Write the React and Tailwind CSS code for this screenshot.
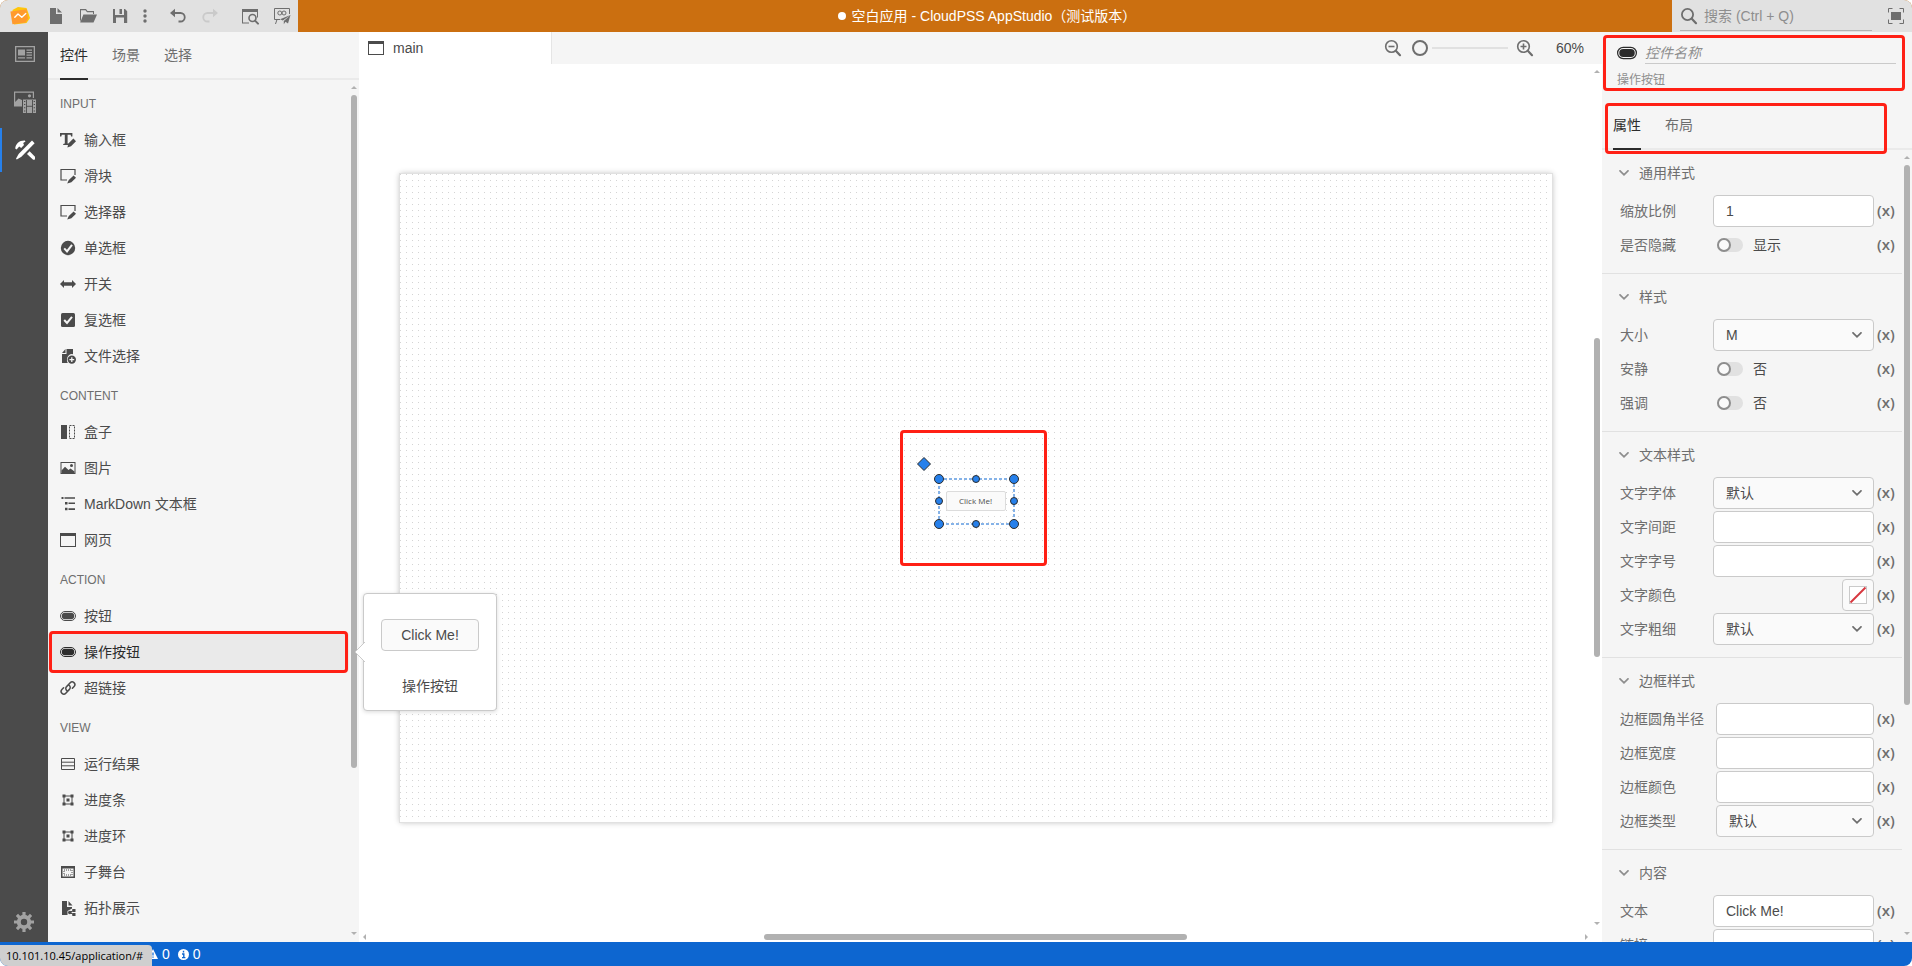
import React from "react";

const Svg = ({ size = "size-4", box = 16, children, className = "" }) => (
  <svg viewBox={`0 0 ${box} ${box}`} fill="currentColor" aria-hidden="true" className={`${size} shrink-0 ${className}`}>
    {children}
  </svg>
);

/* ---------- widget icons ---------- */
const IconTextEdit = () => (
  <Svg>
    <path d="M0 1h12.4v3.6h-1.3L10.600 2.800H7.600V11.400L9.200 12V13H3.200V12L4.800 11.400V2.800H1.800L1.300 4.600H0Z" />
    <path d="M13.400 6.600 16 9.200 11 14.200 7.400 15.600 8.400 11.600Z" />
  </Svg>
);
const IconSlate = () => (
  <Svg>
    <path d="M7 12H1V1.500H15V7" fill="none" stroke="currentColor" strokeWidth="1.200" />
    <path d="M13.600 7.400 16 9.800 11.400 14.200 7.200 15.600 8.800 12Z" />
  </Svg>
);
const IconRadio = () => (
  <Svg>
    <circle cx="8" cy="8" r="7.200" />
    <path d="M4.200 8.400 7 11.400 12 4.800" fill="none" stroke="#f5f5f5" strokeWidth="2" />
  </Svg>
);
const IconSwitch = () => (
  <Svg>
    <path d="M0 8 4 4v2.200h8V4l4 4-4 4V9.800H4V12Z" />
  </Svg>
);
const IconCheckbox = () => (
  <Svg>
    <rect x="1" y="1" width="14" height="14" rx="1.500" />
    <path d="M4.200 8 7 11 12 4.800" fill="none" stroke="#f5f5f5" strokeWidth="2" />
  </Svg>
);
const IconFileAdd = () => (
  <Svg>
    <path d="M2 6h4.500V1H13v5.200A5 5 0 0 0 7 11a5 5 0 0 0 .8 4H2Z" />
    <path d="M5.500 1v4H2Z" />
    <circle cx="11.800" cy="11.600" r="4.200" />
    <path d="M11.800 9.200v4.800M9.400 11.600h4.800" stroke="#f5f5f5" strokeWidth="1.300" />
  </Svg>
);
const IconBox = () => (
  <Svg>
    <rect x="1" y="1" width="6" height="14" />
    <rect x="9.500" y="1.500" width="5" height="13" fill="none" stroke="currentColor" strokeDasharray="2 1" />
  </Svg>
);
const IconImage = () => (
  <Svg>
    <rect x="1" y="2.500" width="14" height="11" fill="none" stroke="currentColor" />
    <path d="M1.500 10.500 5 6.800 8.500 10 10.500 8.500 14.500 11.500V13.500H1.500Z" />
    <circle cx="11.500" cy="5.500" r="1.500" />
  </Svg>
);
const IconOutline = () => (
  <Svg>
    <path d="M1.500 1h2v2h-2ZM4.500 1.200h10.500v1.600H4.500ZM5 6h2.500v2.500H5ZM8.500 6.500H15v1.600H8.500ZM5 11.800h2.500v2.500H5ZM8.500 12.300H15v1.600H8.500Z" />
  </Svg>
);
const IconWindow = ({ size }) => (
  <Svg size={size}>
    <path fillRule="evenodd" d="M0 1h16v14H0ZM1 4v10h14V4Z" />
  </Svg>
);
const IconButton = ({ size }) => (
  <Svg size={size}>
    <rect x="0.500" y="3.500" width="15" height="9" rx="4.500" fill="none" stroke="currentColor" strokeWidth="1" />
    <rect x="1.800" y="4.800" width="12.400" height="6.400" rx="3.200" />
  </Svg>
);
const IconLink = () => (
  <Svg>
    <g fill="none" stroke="currentColor" strokeWidth="1.500" strokeLinecap="round">
      <path d="M7.200 10.800A2.600 2.600 0 0 1 6.600 6.600L10.200 2.800a2.600 2.600 0 0 1 3.900 3.600L12.400 8.300" />
      <path d="M8.800 5.200a2.600 2.600 0 0 1 .6 4.200L5.800 13.200a2.600 2.600 0 0 1-3.900-3.600L3.600 7.700" />
    </g>
  </Svg>
);
const IconRows = () => (
  <Svg>
    <path d="M1.500 2.500h13v11h-13ZM1.500 6.200h13M1.500 9.800h13" fill="none" stroke="currentColor" />
  </Svg>
);
const IconFrame = () => (
  <Svg>
    <path d="M4 4h8v8H4Z" fill="none" stroke="currentColor" />
    <path d="M2.500 2.500h3v3h-3ZM10.500 2.500h3v3h-3ZM2.500 10.500h3v3h-3ZM10.500 10.500h3v3h-3ZM6.500 6.500h3v3h-3Z" />
  </Svg>
);
const IconStage = () => (
  <Svg>
    <path fillRule="evenodd" d="M1 2h14v12H1ZM2.500 4.500v8h11v-8Z" />
    <rect x="4" y="6" width="8" height="5" fill="none" stroke="currentColor" strokeDasharray="1 1" />
  </Svg>
);
const IconTopology = () => (
  <Svg>
    <path d="M2 1h5v6h5v1.500L7.500 11v4H2Z" />
    <path d="M8.500 1 12.500 5.500H8.500Z" />
    <path d="M13.500 10.500 9.500 12.500 13.500 14.500" fill="none" stroke="currentColor" />
    <circle cx="9.800" cy="12.500" r="1.800" />
    <path d="M12.300 9h3.200v3h-3.200ZM12.300 13h3.200v3h-3.200Z" />
  </Svg>
);

/* ---------- toolbar icons ---------- */
const IconLogo = () => (
  <Svg size="size-5" box={20}>
    <path d="M2.500 4 8 .9 16.500 2 18 6 20 12l-3.500 5L4 18.500Z" fill="#ffc60a" />
    <path d="M.4 5.600 16.600 3.200 18 12.600 15.600 16.600 2.400 18.200Z" fill="#ff9a2e" />
    <path d="M4.800 11.200 8 8l3.800 3.200 4-3.600" fill="none" stroke="#fff" strokeWidth="1.400" strokeLinecap="round" strokeLinejoin="round" />
  </Svg>
);
const IconFile = () => (
  <Svg size="size-[18px]" box={18}>
    <path d="M3 1h6v6h6v10H3ZM10.500 1 15 5.500H10.500Z" />
  </Svg>
);
const IconOpen = () => (
  <Svg size="size-[18px]" box={18}>
    <path d="M1 2h6l1.500 2H15v3h-1V5.200H8L6.500 3.200H2V12.500L1 15Z" />
    <path d="M4.400 7.500H18L14.500 15.500H1.200Z" />
  </Svg>
);
const IconSave = () => (
  <Svg size="size-[18px]" box={18}>
    <path fillRule="evenodd" d="M2 2h2v6h9V2h1l2.200 2.200V16H2ZM5 10.500V16h8v-5.500Z" />
    <path d="M8.500 2h2.500v5H8.500Z" />
  </Svg>
);
const IconMore = () => (
  <Svg size="size-4">
    <circle cx="8" cy="3" r="1.700" />
    <circle cx="8" cy="8" r="1.700" />
    <circle cx="8" cy="13" r="1.700" />
  </Svg>
);
const IconUndo = ({ flip = "" }) => (
  <Svg size="size-[18px]" box={18} className={flip}>
    <path d="M1 6 6 1.800v8.400Z" />
    <path d="M4 6h7.500a4 4 0 0 1 0 8.500H9.500" fill="none" stroke="currentColor" strokeWidth="1.800" />
  </Svg>
);
const IconPreview = () => (
  <Svg size="size-[18px]" box={18}>
    <path d="M1 2h16v8.500h-1V5H2v10.500h6v1H1Z" />
    <circle cx="11.500" cy="11" r="3.500" fill="none" stroke="currentColor" strokeWidth="1.600" />
    <path d="m14 13.600 3 3" stroke="currentColor" strokeWidth="2" strokeLinecap="round" />
  </Svg>
);
const IconPublish = () => (
  <Svg size="size-[18px]" box={18}>
    <path d="M7 12.500H1.500v-11h15V7" fill="none" stroke="currentColor" />
    <circle cx="6.800" cy="6" r="2" fill="none" stroke="currentColor" />
    <circle cx="11" cy="6" r="2" fill="none" stroke="currentColor" />
    <path d="M17.500 8 7 12.200l2.800 1.200ZM17.500 8l-6.700 6v3.200l1.700-2.400 2.500 1.600Z" />
    <path d="M4 12.500 2.500 17" stroke="currentColor" />
  </Svg>
);
const IconSearch = () => (
  <Svg size="size-[18px]" box={18}>
    <circle cx="7.500" cy="7.500" r="5.600" fill="none" stroke="currentColor" strokeWidth="1.800" />
    <path d="m11.800 11.800 4.200 4.400" stroke="currentColor" strokeWidth="2.200" strokeLinecap="round" />
  </Svg>
);
const IconZoom = ({ plus }) => (
  <Svg size="size-[18px]" box={18}>
    <circle cx="7.500" cy="7.500" r="5.800" fill="none" stroke="currentColor" strokeWidth="1.600" />
    <path d="m11.800 11.800 4.200 4.400" stroke="currentColor" strokeWidth="2.200" strokeLinecap="round" />
    <path d={plus ? "M4.500 7.500h6M7.500 4.500v6" : "M4.500 7.500h6"} stroke="currentColor" strokeWidth="1.600" />
  </Svg>
);
const IconFullscreen = () => (
  <Svg size="size-[18px]" box={18}>
    <path d="M1.500 5.500v-4h4M12.500 1.500h4v4M16.500 12.500v4h-4M5.500 16.500h-4v-4" fill="none" stroke="currentColor" />
    <rect x="4" y="5" width="10" height="8" />
  </Svg>
);

/* ---------- side rail icons ---------- */
const IconNews = () => (
  <Svg size="size-5" box={20}>
    <path fillRule="evenodd" d="M0 2h20v16H0ZM1.300 3.300v13.400h17.400V3.300Z" />
    <path d="M3 5.500h7v6H3ZM11.500 5.500H17v1.200h-5.500ZM11.500 8H17v1.200h-5.500ZM11.500 10.500H17v1.200h-5.500ZM3 13.300h7v1.200H3ZM11.500 13.300H17v1.200h-5.500Z" />
  </Svg>
);
const IconMedia = () => (
  <Svg size="size-[22px]" box={22}>
    <path d="M0 .5h20V7h-1.200V1.700H1.200V11L4.500 7.500 8 9V15.500H0Z" />
    <circle cx="15.500" cy="4.800" r="1.600" />
    <path d="M9 8.500h13V22H9Z" />
    <path d="M12.500 9v13M18.500 9v13M12.500 15.300h6" stroke="#4b4b4b" strokeWidth=".9" fill="none" />
    <path d="M10 10.500h1.300M10 13.500h1.300M10 16.800h1.300M10 20h1.300M19.700 10.500H21M19.700 13.500H21M19.700 16.800H21M19.700 20H21" stroke="#4b4b4b" strokeWidth="1.100" />
  </Svg>
);
const IconTools = () => (
  <Svg size="size-5" box={20}>
    <path d="M17 .6 19.600 3.200 6.400 16.800 1.800 19.600 1 18.800 3.600 14Z" />
    <path d="M.2 8.500C.8 3.600 4 .3 9.800.4L10.500 1.600 8.200 3 9 5 6.200 8 4.200 6.600 1.600 9.600Z" />
    <path d="M14.600 11.200 20 16.800a1.500 1.500 0 0 1-2.400 2.400L12 14Z" />
  </Svg>
);
const IconGear = () => (
  <Svg size="size-5" box={20}>
    <circle cx="10" cy="10" r="5.200" fill="none" stroke="currentColor" strokeWidth="4" />
    <g stroke="currentColor" strokeWidth="3.200">
      <path d="M10 0v4M10 16v4M0 10h4M16 10h4M2.930 2.930 5.800 5.800M14.200 14.200l2.870 2.870M2.930 17.070 5.800 14.200M14.200 5.800l2.870-2.870" />
    </g>
  </Svg>
);

const Chevron = ({ className = "" }) => (
  <svg viewBox="0 0 10 6" aria-hidden="true" className={`h-1.5 w-2.5 shrink-0 ${className}`}>
    <path d="M1 .8 5 4.800 9 .8" fill="none" stroke="currentColor" strokeWidth="1.700" strokeLinecap="round" />
  </svg>
);

/* ---------- scroll bars ---------- */
const VScroll = ({ thumb }) => (
  <div className="flex w-2.5 shrink-0 flex-col items-center gap-1.5 pt-1.5 pb-[7px] text-[#b1b1b1]">
    <svg viewBox="0 0 6 3" className="h-[3px] w-1.5 shrink-0" fill="currentColor"><path d="M0 3 3 0 6 3Z" /></svg>
    <div className="flex min-h-0 w-1.5 flex-1 flex-col">{thumb}</div>
    <svg viewBox="0 0 6 3" className="h-[3px] w-1.5 shrink-0" fill="currentColor"><path d="M0 0H6L3 3Z" /></svg>
  </div>
);
const HScroll = () => (
  <div className="mr-2.5 flex h-2.5 shrink-0 items-center gap-1.5 px-1 text-[#b1b1b1]">
    <svg viewBox="0 0 3 6" className="h-1.5 w-[3px] shrink-0" fill="currentColor"><path d="M3 0V6L0 3Z" /></svg>
    <div className="flex h-1.5 flex-1 justify-center">
      <div className="w-[35%] rounded-full bg-[#b1b1b1]" />
    </div>
    <svg viewBox="0 0 3 6" className="h-1.5 w-[3px] shrink-0" fill="currentColor"><path d="M0 0V6L3 3Z" /></svg>
  </div>
);

const Mark = ({ className }) => (
  <div className={`pointer-events-none absolute rounded-[4px] border-3 border-[#ff2015] ${className}`} />
);

/* ---------- header ---------- */
const tool = "flex h-8 w-8 items-center justify-center";
const Header = () => (
  <header className="flex h-8 shrink-0 bg-[#cb6f10]">
    <div className="flex bg-[#e1e1e1] pl-1 text-[#6e6e6e]">
      <button aria-label="CloudPSS" className={`${tool} mr-1`}><IconLogo /></button>
      <button aria-label="新建" className={tool}><IconFile /></button>
      <button aria-label="打开" className={tool}><IconOpen /></button>
      <button aria-label="保存" className={tool}><IconSave /></button>
      <button aria-label="更多" className="mr-2 flex w-[18px] items-center justify-center"><IconMore /></button>
      <button aria-label="撤销" className={tool}><IconUndo /></button>
      <button aria-label="重做" disabled className={`${tool} mr-2 text-[#cacaca]`}><IconUndo flip="-scale-x-100" /></button>
      <button aria-label="预览" className={tool}><IconPreview /></button>
      <button aria-label="发布" className={tool}><IconPublish /></button>
    </div>
    <h1 className="flex flex-1 items-center justify-center gap-1.5 pl-1 text-sm text-white">
      <span className="size-2 rounded-full bg-white" />
      空白应用 - CloudPSS AppStudio（测试版本）
    </h1>
    <div className="flex w-60 items-center bg-[#e1e1e1] pr-[7px] pl-2 text-[#6e6e6e]">
      <label className="flex h-[29px] flex-1 items-center gap-1.5 border-b border-[#b3b3b3]">
        <IconSearch />
        <input type="search" aria-label="搜索" placeholder="搜索 (Ctrl + Q)" className="w-40 bg-transparent text-sm outline-none placeholder:text-[#8e8e8e]" />
      </label>
      <button aria-label="全屏" className="ml-[15px]"><IconFullscreen /></button>
    </div>
  </header>
);

/* ---------- side rail ---------- */
const rail = "flex h-11 w-full items-center justify-center pl-0.5";
const Rail = () => (
  <nav className="flex w-12 shrink-0 flex-col gap-1 bg-[#4b4b4b] text-[#a2a2a2]">
    <button aria-label="页面" className={rail}><IconNews /></button>
    <button aria-label="资源" className={rail}><IconMedia /></button>
    <button aria-label="控件" className="flex h-11 w-full items-center justify-center border-l-2 border-[#2680eb] text-white"><IconTools /></button>
    <button aria-label="设置" className="mt-auto mb-2.5 flex w-full justify-center"><IconGear /></button>
  </nav>
);

/* ---------- widget panel ---------- */
const groups = [
  ["INPUT", [[IconTextEdit, "输入框"], [IconSlate, "滑块"], [IconSlate, "选择器"], [IconRadio, "单选框"], [IconSwitch, "开关"], [IconCheckbox, "复选框"], [IconFileAdd, "文件选择"]]],
  ["CONTENT", [[IconBox, "盒子"], [IconImage, "图片"], [IconOutline, "MarkDown 文本框"], [IconWindow, "网页"]]],
  ["ACTION", [[IconButton, "按钮"], [IconButton, "操作按钮"], [IconLink, "超链接"]]],
  ["VIEW", [[IconRows, "运行结果"], [IconFrame, "进度条"], [IconFrame, "进度环"], [IconStage, "子舞台"], [IconTopology, "拓扑展示"]]],
];

const tabOn = "h-full border-b-2 border-[#2c2c2c] text-[#2c2c2c]";
const tabOff = "h-full border-b-2 border-transparent text-[#6e6e6e]";

const WidgetPanel = () => (
  <aside className="flex w-[311px] shrink-0 flex-col bg-[#f5f5f5]">
    <div className="flex h-12 shrink-0 gap-6 px-3 text-sm shadow-[inset_0_-2px_#eaeaea]">
      <button className={tabOn}>控件</button>
      <button className={tabOff}>场景</button>
      <button className={tabOff}>选择</button>
    </div>
    <div className="flex min-h-0 flex-1">
      <div className="flex-1 overflow-hidden pt-0.5">
        {groups.map(([title, items]) => (
          <section key={title}>
            <h2 className="flex h-10 items-center px-3 pt-1 text-xs text-[#6e6e6e]">{title}</h2>
            <ul>
              {items.map(([Icon, name]) => {
                const active = name === "操作按钮";
                return (
                  <li key={name} className="relative">
                    <button className={`flex h-9 w-full items-center gap-2 px-3 text-sm ${active ? "bg-[#eaeaea] text-[#2c2c2c]" : "text-[#4b4b4b]"}`}>
                      <Icon />
                      {name}
                    </button>
                    {active && <Mark className="-inset-y-[3px] right-px left-px" />}
                  </li>
                );
              })}
            </ul>
          </section>
        ))}
      </div>
      <VScroll thumb={<div className="h-[81%] rounded-full bg-[#b1b1b1]" />} />
    </div>
  </aside>
);

const Preview = () => (
  <div className="absolute top-[561px] left-[363px] flex w-[134px] flex-col items-center rounded border border-[#cacaca] bg-white pt-[25px] pb-[14px] text-sm text-[#4b4b4b] shadow-[0_1px_4px_rgba(0,0,0,0.15)]">
    <svg viewBox="0 0 11 20" className="absolute top-12 -left-2.5 h-5 w-[11px]">
      <path d="M11 0 1 10 11 20" fill="#fff" stroke="#cacaca" />
    </svg>
    <button className="h-8 w-[98px] rounded border border-[#cacaca] bg-[#fafafa]">Click Me!</button>
    <span className="mt-[25px] leading-5">操作按钮</span>
  </div>
);

/* ---------- canvas ---------- */
const corners = [[20, 20], [95, 20], [20, 65], [95, 65]];
const mids = [[57, 20], [57, 65], [20, 42], [95, 42]];

const Canvas = () => (
  <main className="flex min-w-0 flex-1 flex-col bg-white">
    <div className="flex h-8 shrink-0 justify-between bg-[#f5f5f5] text-sm text-[#4b4b4b]">
      <button className="flex w-[193px] items-center gap-[9px] border-r border-[#e5e5e5] bg-white px-[9px]">
        <IconWindow />
        main
      </button>
      <div className="flex items-center pr-[18px] text-[#6e6e6e]">
        <button aria-label="缩小" className="mr-2.5"><IconZoom /></button>
        <input
          type="range"
          aria-label="缩放"
          defaultValue="0"
          className="mr-2 w-24 appearance-none bg-transparent [&::-webkit-slider-runnable-track]:h-0.5 [&::-webkit-slider-runnable-track]:bg-[linear-gradient(to_right,transparent_20px,#e1e1e1_20px)] [&::-webkit-slider-thumb]:-mt-[7px] [&::-webkit-slider-thumb]:size-4 [&::-webkit-slider-thumb]:appearance-none [&::-webkit-slider-thumb]:rounded-full [&::-webkit-slider-thumb]:border-2 [&::-webkit-slider-thumb]:border-[#6e6e6e] [&::-webkit-slider-thumb]:bg-[#f5f5f5]"
        />
        <button aria-label="放大" className="mr-[22px]"><IconZoom plus /></button>
        <span className="text-[#4b4b4b]">60%</span>
      </div>
    </div>
    <div className="flex min-h-0 flex-1">
      <div className="flex flex-1 items-center justify-center overflow-hidden">
        <div className="relative h-[648px] w-[1152px] shrink-0 bg-white bg-[radial-gradient(circle_at_0_0,#d4d4d4_1px,transparent_1px)] bg-size-[6px_6px] shadow-[0_0_0_1px_#e1e1e1,0_0_6px_rgba(0,0,0,0.3)]">
          <button className="absolute top-[317px] left-[546px] h-5 w-[60px] rounded-[2px] border border-[#dcdcdc] bg-[#fafafa] font-['Open_Sans',sans-serif] text-[8px] leading-none text-[#4b4b4b]">
            Click Me!
          </button>
          <svg viewBox="0 0 115 85" className="absolute top-[285px] left-[519px] h-[85px] w-[115px] overflow-visible">
            <rect x="20" y="20" width="75" height="45" fill="none" stroke="#0d66d0" strokeDasharray="3 2" />
            <path d="M5-1.500 11.500 5 5 11.500-1.500 5Z" fill="#2680eb" stroke="#2c2c2c" />
            {corners.map(([x, y]) => <circle key={`${x}-${y}`} cx={x} cy={y} r="4.500" fill="#2680eb" stroke="#2c2c2c" />)}
            {mids.map(([x, y]) => <circle key={`${x}-${y}`} cx={x} cy={y} r="3.500" fill="#2680eb" stroke="#2c2c2c" />)}
          </svg>
          <Mark className="top-64 left-[500px] h-[136px] w-[147px]" />
        </div>
      </div>
      <VScroll
        thumb={
          <>
            <div className="h-[31%]" />
            <div className="h-[38%] rounded-full bg-[#b1b1b1]" />
          </>
        }
      />
    </div>
    <HScroll />
  </main>
);

/* ---------- property panel ---------- */
const fieldBox = "h-8 w-full rounded border border-[#cacaca] px-3 text-sm text-[#4b4b4b] outline-none";

const Field = ({ id, kind, value }) => {
  if (kind === "text") return <input id={id} defaultValue={value} className={`${fieldBox} bg-white`} />;
  if (kind === "select")
    return (
      <div className="relative">
        <select id={id} className={`${fieldBox} block appearance-none bg-[#fafafa]`}>
          <option>{value}</option>
        </select>
        <Chevron className="pointer-events-none absolute top-[13px] right-3 text-[#6e6e6e]" />
      </div>
    );
  if (kind === "switch")
    return (
      <div className="flex items-center gap-2.5 pl-1 text-[#4b4b4b]">
        <input
          id={id}
          type="checkbox"
          className="h-3.5 w-[26px] appearance-none rounded-full bg-[#e1e1e1] before:block before:size-3.5 before:rounded-full before:border-2 before:border-[#8e8e8e] before:bg-[#fafafa] before:content-['']"
        />
        {value}
      </div>
    );
  return (
    <div className="flex justify-end">
      <button id={id} aria-label="选择颜色" className="flex size-8 items-center justify-center rounded border border-[#cacaca] bg-[#fafafa]">
        <svg viewBox="0 0 18 18" className="size-[18px]">
          <rect x=".5" y=".5" width="17" height="17" fill="#fff" stroke="#cacaca" />
          <path d="M1.500 16.500 16.500 1.500" stroke="#d7373f" strokeWidth="2" />
        </svg>
      </button>
    </div>
  );
};

const sections = [
  ["通用样式", [["缩放比例", "text", "1"], ["是否隐藏", "switch", "显示"]]],
  ["样式", [["大小", "select", "M"], ["安静", "switch", "否"], ["强调", "switch", "否"]]],
  ["文本样式", [["文字字体", "select", "默认"], ["文字间距", "text", ""], ["文字字号", "text", ""], ["文字颜色", "color", ""], ["文字粗细", "select", "默认"]]],
  ["边框样式", [["边框圆角半径", "text", ""], ["边框宽度", "text", ""], ["边框颜色", "text", ""], ["边框类型", "select", "默认"]]],
  ["内容", [["文本", "text", "Click Me!"], ["链接", "text", ""]]],
];

const PropertyPanel = () => (
  <aside className="flex w-[310px] shrink-0 flex-col bg-[#f5f5f5]">
    <div className="relative shrink-0 pt-2.5 pr-4 pb-[13px] pl-[15px]">
      <div className="flex items-center gap-2 text-[#2c2c2c]">
        <IconButton size="size-5" />
        <input aria-label="控件名称" placeholder="控件名称" className="h-[22px] min-w-0 flex-1 border-b border-[#cacaca] bg-transparent text-sm italic outline-none placeholder:text-[#8e8e8e]" />
      </div>
      <p className="mt-2 text-xs leading-4 text-[#8e8e8e]">操作按钮</p>
      <Mark className="top-[3px] right-[7px] left-px h-14" />
    </div>
    <div className="relative flex h-[49px] shrink-0 gap-6 px-[11px] text-sm shadow-[inset_0_-2px_#eaeaea]">
      <button className={tabOn}>属性</button>
      <button className={tabOff}>布局</button>
      <Mark className="top-0.5 right-[25px] -bottom-1 left-[3px]" />
    </div>
    <div className="flex min-h-0 flex-1">
      <div className="flex-1 overflow-hidden">
        {sections.map(([title, rows], i) => (
          <section key={title} className={i ? "border-t border-[#e1e1e1]" : ""}>
            <h2>
              <button aria-expanded="true" className="flex h-[45px] w-full items-center gap-2.5 pl-[17px] text-sm text-[#6e6e6e]">
                <Chevron className="text-[#8e8e8e]" />
                {title}
              </button>
            </h2>
            <div className="grid auto-rows-[32px] grid-cols-[minmax(89px,auto)_minmax(0,1fr)_auto] items-center gap-x-1 gap-y-0.5 pr-2 pb-3 pl-[18px] text-sm text-[#6e6e6e]">
              {rows.map(([label, kind, value]) => (
                <React.Fragment key={label}>
                  <label htmlFor={label} className="pr-2 whitespace-nowrap">{label}</label>
                  <Field id={label} kind={kind} value={value} />
                  <button aria-label={`${label} 表达式`} className="flex w-4 justify-center font-['Open_Sans',sans-serif] text-[15px] font-semibold">(x)</button>
                </React.Fragment>
              ))}
            </div>
          </section>
        ))}
      </div>
      <VScroll thumb={<div className="h-[71%] rounded-full bg-[#b1b1b1]" />} />
    </div>
  </aside>
);

/* ---------- status bar ---------- */
const StatusBar = () => (
  <footer className="relative flex h-6 shrink-0 items-center bg-[#0d66d0] pl-[148px] text-sm text-white">
    <button className="flex items-center gap-1">
      <Svg size="size-2.5" box={10}>
        <path d="M5 0 10 10H0Z" />
        <path d="M5 3.500v3M5 7.500v1.200" stroke="#0d66d0" strokeWidth="1.200" />
      </Svg>
      0
    </button>
    <button className="ml-2 flex items-center gap-1">
      <Svg size="size-[11px]" box={11}>
        <circle cx="5.500" cy="5.500" r="5.500" />
        <path d="M5.500 1.800v1.700M4 5h1.800v3.400M4 8.600h3.400" fill="none" stroke="#0d66d0" strokeWidth="1.400" />
      </Svg>
      0
    </button>
    <div className="absolute bottom-0 left-0 flex h-[21px] w-[152px] items-center rounded-tr bg-[#cfcfcf] pl-1.5 font-['Open_Sans',sans-serif] text-[11px] whitespace-nowrap text-black">
      10.101.10.45/application/#
    </div>
  </footer>
);

export default function App() {
  return (
    <div className="flex h-screen flex-col overflow-hidden rounded-lg bg-white font-['Liberation_Sans','Noto_Sans_CJK_SC',sans-serif]">
      <Header />
      <div className="relative flex min-h-0 flex-1">
        <Rail />
        <WidgetPanel />
        <Canvas />
        <PropertyPanel />
        <Preview />
      </div>
      <StatusBar />
    </div>
  );
}
